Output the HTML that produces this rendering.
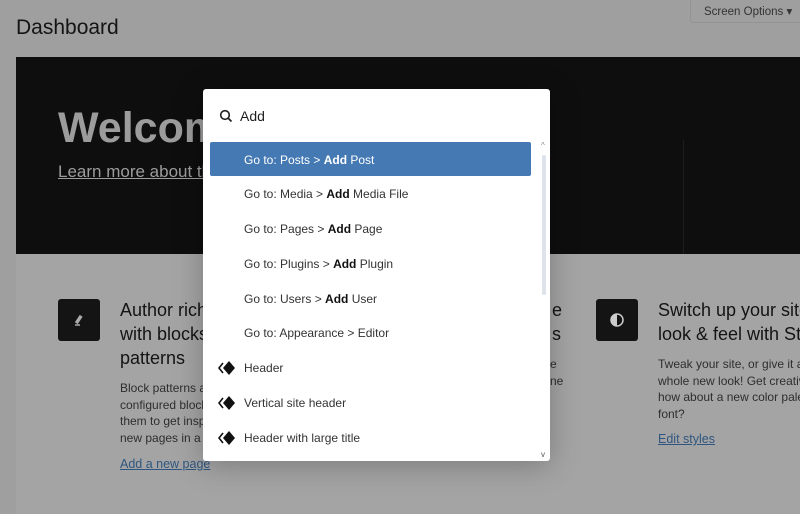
<!DOCTYPE html>
<html><head><style>
*{margin:0;padding:0;box-sizing:border-box}
body{width:800px;height:514px;overflow:hidden;background:#9f9f9f;font-family:"Liberation Sans",sans-serif;position:relative;color:#1a1a1a}
.a{position:absolute;white-space:nowrap}
.h{font-size:18px;color:#141414;line-height:24px}
.p{font-size:12px;color:#2e2e2e;line-height:16.5px}
.lnk{font-size:12.5px;color:#2f5680;text-decoration:underline}
.ib{position:absolute;width:42px;height:42px;background:#141414;border-radius:3px}
.row{position:absolute;left:244px;font-size:12px;color:#333;white-space:nowrap}
.row b{color:#111}
.dia{position:absolute;left:218px}
</style></head><body>
<div class="a" style="left:16px;top:16px;font-size:21px;color:#141414">Dashboard</div>
<div class="a" style="left:690px;top:-1px;width:115px;height:24px;border:1px solid #949494;border-top:none;border-radius:0 0 3px 3px;font-size:11.5px;color:#333;padding:5px 0 0 13px">Screen Options ▾</div>
<div class="a" style="left:16px;top:57px;width:784px;height:197px;background:#0e0e0e"></div>
<div class="a" style="left:683px;top:140px;width:1px;height:114px;background:#1e1e1e"></div>
<div class="a" style="left:58px;top:104px;font-size:43px;font-weight:bold;color:#9c9c9c">Welcome</div>
<div class="a" style="left:58px;top:162px;font-size:17px;color:#9c9c9c;text-decoration:underline">Learn more about the</div>
<div class="a" style="left:16px;top:254px;width:784px;height:260px;background:#a4a4a4"></div>
<div class="ib" style="left:58px;top:299px"></div>
<svg class="a" style="left:70px;top:311px" width="18" height="18" viewBox="0 0 18 18"><path d="M5 14h5M6 11l4-6 1.5 1-4 6z" stroke="#aaa" stroke-width="1.6" fill="#aaa"/></svg>
<div class="a h" style="left:120px;top:298px">Author rich content<br>with blocks and<br>patterns</div>
<div class="a p" style="left:120px;top:380px">Block patterns are pre-<br>configured block layouts. Use<br>them to get inspired or create<br>new pages in a flash.</div>
<div class="a lnk" style="left:120px;top:457px">Add a new page</div>
<div class="a h" style="left:552px;top:298px">e<br>s</div>
<div class="a p" style="left:550px;top:356px">e<br>ne</div>
<div class="ib" style="left:596px;top:299px"></div>
<svg class="a" style="left:609px;top:312px" width="16" height="16" viewBox="0 0 16 16"><circle cx="8" cy="8" r="6" fill="none" stroke="#ccc" stroke-width="1.5"/><path d="M8 2a6 6 0 0 0 0 12z" fill="#ccc"/></svg>
<div class="a h" style="left:658px;top:298px">Switch up your site's<br>look &amp; feel with Styles</div>
<div class="a p" style="left:658px;top:356px">Tweak your site, or give it a<br>whole new look! Get creative —<br>how about a new color palette or<br>font?</div>
<div class="a lnk" style="left:658px;top:432px">Edit styles</div>

<div class="a" style="left:203px;top:89px;width:347px;height:372px;background:#fff;border-radius:3px;box-shadow:0 4px 30px rgba(0,0,0,.25)"></div>
<svg class="a" style="left:219px;top:109px" width="14" height="14" viewBox="0 0 14 14"><circle cx="6" cy="6" r="4.3" fill="none" stroke="#1e1e1e" stroke-width="1.6"/><path d="M9 9l3.5 3.5" stroke="#1e1e1e" stroke-width="1.7"/></svg>
<div class="a" style="left:240px;top:108px;font-size:14px;color:#1e1e1e">Add</div>
<div class="a" style="left:210px;top:142px;width:321px;height:34px;background:#4479b4;border-radius:2px"></div>
<div class="row" style="top:153px;color:#fff">Go to: Posts &gt; <b style="color:#fff">Add</b> Post</div>
<div class="row" style="top:187px">Go to: Media &gt; <b>Add</b> Media File</div>
<div class="row" style="top:222px">Go to: Pages &gt; <b>Add</b> Page</div>
<div class="row" style="top:257px">Go to: Plugins &gt; <b>Add</b> Plugin</div>
<div class="row" style="top:292px">Go to: Users &gt; <b>Add</b> User</div>
<div class="row" style="top:326px">Go to: Appearance &gt; Editor</div>
<div class="row" style="top:361px">Header</div>
<div class="row" style="top:396px">Vertical site header</div>
<div class="row" style="top:431px">Header with large title</div>
<svg class="dia" style="top:361px" width="18" height="14" viewBox="0 0 18 14"><path d="M5 2L1 7l4 5" fill="none" stroke="#111" stroke-width="1.6"/><path d="M11 0l6 7-6 7-6-7z" fill="#111"/></svg>
<svg class="dia" style="top:396px" width="18" height="14" viewBox="0 0 18 14"><path d="M5 2L1 7l4 5" fill="none" stroke="#111" stroke-width="1.6"/><path d="M11 0l6 7-6 7-6-7z" fill="#111"/></svg>
<svg class="dia" style="top:431px" width="18" height="14" viewBox="0 0 18 14"><path d="M5 2L1 7l4 5" fill="none" stroke="#111" stroke-width="1.6"/><path d="M11 0l6 7-6 7-6-7z" fill="#111"/></svg>
<div class="a" style="left:542px;top:155px;width:4px;height:140px;background:#dde3ea;border-radius:2px"></div>
<div class="a" style="left:541px;top:141px;font-size:8px;color:#888">^</div>
<div class="a" style="left:541px;top:450px;font-size:8px;color:#555">v</div>
</body></html>
